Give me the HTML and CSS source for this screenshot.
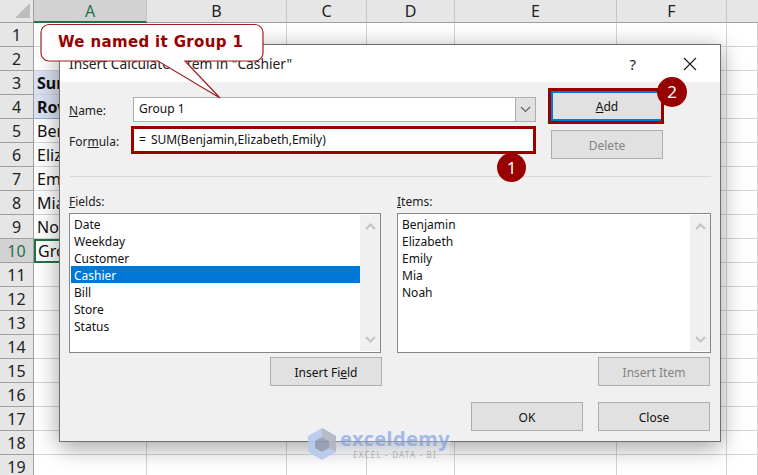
FILE: index.html
```html
<!DOCTYPE html>
<html lang="en">
<head>
<meta charset="utf-8">
<title>Insert Calculated Item</title>
<link rel="stylesheet" href="styles.css">
</head>
<body>
<div class="stage">
  <div class="sheet">
    <div class="ch corner"><svg width="33" height="22" viewBox="0 0 33 22"><path d="M15 18 30 3V18Z" fill="#bcbcbc"/></svg></div>
    <div class="ch ch-on">A</div><div class="ch">B</div><div class="ch">C</div><div class="ch">D</div><div class="ch">E</div><div class="ch">F</div><div class="ch end"></div>

    <div class="rh">1</div><div class="c"></div><div class="c"></div><div class="c"></div><div class="c"></div><div class="c"></div><div class="c"></div><div class="c"></div>
    <div class="rh">2</div><div class="c"></div><div class="c"></div><div class="c"></div><div class="c"></div><div class="c"></div><div class="c"></div><div class="c"></div>
    <div class="rh">3</div><div class="c hd">Sum of Bill</div><div class="c"></div><div class="c"></div><div class="c"></div><div class="c"></div><div class="c"></div><div class="c"></div>
    <div class="rh">4</div><div class="c hd hd-last">Row Labels</div><div class="c"></div><div class="c"></div><div class="c"></div><div class="c"></div><div class="c"></div><div class="c"></div>
    <div class="rh">5</div><div class="c">Benjamin</div><div class="c"></div><div class="c"></div><div class="c"></div><div class="c"></div><div class="c"></div><div class="c"></div>
    <div class="rh">6</div><div class="c">Elizabeth</div><div class="c"></div><div class="c"></div><div class="c"></div><div class="c"></div><div class="c"></div><div class="c"></div>
    <div class="rh">7</div><div class="c">Emily</div><div class="c"></div><div class="c"></div><div class="c"></div><div class="c"></div><div class="c"></div><div class="c"></div>
    <div class="rh">8</div><div class="c">Mia</div><div class="c"></div><div class="c"></div><div class="c"></div><div class="c"></div><div class="c"></div><div class="c"></div>
    <div class="rh">9</div><div class="c">Noah</div><div class="c"></div><div class="c"></div><div class="c"></div><div class="c"></div><div class="c"></div><div class="c"></div>
    <div class="rh rh-on">10</div><div class="c active">Group 1</div><div class="c"></div><div class="c"></div><div class="c"></div><div class="c"></div><div class="c"></div><div class="c"></div>
    <div class="rh">11</div><div class="c"></div><div class="c"></div><div class="c"></div><div class="c"></div><div class="c"></div><div class="c"></div><div class="c"></div>
    <div class="rh">12</div><div class="c"></div><div class="c"></div><div class="c"></div><div class="c"></div><div class="c"></div><div class="c"></div><div class="c"></div>
    <div class="rh">13</div><div class="c"></div><div class="c"></div><div class="c"></div><div class="c"></div><div class="c"></div><div class="c"></div><div class="c"></div>
    <div class="rh">14</div><div class="c"></div><div class="c"></div><div class="c"></div><div class="c"></div><div class="c"></div><div class="c"></div><div class="c"></div>
    <div class="rh">15</div><div class="c"></div><div class="c"></div><div class="c"></div><div class="c"></div><div class="c"></div><div class="c"></div><div class="c"></div>
    <div class="rh">16</div><div class="c"></div><div class="c"></div><div class="c"></div><div class="c"></div><div class="c"></div><div class="c"></div><div class="c"></div>
    <div class="rh">17</div><div class="c"></div><div class="c"></div><div class="c"></div><div class="c"></div><div class="c"></div><div class="c"></div><div class="c"></div>
    <div class="rh">18</div><div class="c"></div><div class="c"></div><div class="c"></div><div class="c"></div><div class="c"></div><div class="c"></div><div class="c"></div>
    <div class="rh">19</div><div class="c"></div><div class="c"></div><div class="c"></div><div class="c"></div><div class="c"></div><div class="c"></div><div class="c"></div>
  </div>

  <div class="dialog">
    <div class="titlebar">
      <span class="title">Insert Calculated Item in "Cashier"</span>
      <span class="help">?</span>
      <svg class="close-x" width="14" height="14" viewBox="0 0 14 14"><path d="M1 1 13 13M13 1 1 13" stroke="#1a1a1a" stroke-width="1.1" fill="none"/></svg>
    </div>
    <div class="body">
      <div class="top">
        <div class="form">
          <div class="form-row">
            <label class="lbl"><u>N</u>ame:</label>
            <div class="combo">
              <div class="combo-text">Group 1</div>
              <div class="combo-btn"><svg width="11" height="7" viewBox="0 0 11 7"><path d="M1 1 5.5 5.5 10 1" stroke="#606060" stroke-width="1.1" fill="none"/></svg></div>
            </div>
          </div>
          <div class="form-row form-row-2">
            <label class="lbl">For<u>m</u>ula:</label>
            <div class="formula">= SUM(Benjamin,Elizabeth,Emily)</div>
          </div>
        </div>
        <div class="actions">
          <button class="btn btn-default"><u>A</u>dd</button>
          <button class="btn btn-off">Delete</button>
        </div>
      </div>
      <div class="sep"></div>
      <div class="lists">
        <div class="col">
          <div class="list-label"><u>F</u>ields:</div>
          <div class="list">
            <div class="rows">
              <div class="row">Date</div>
              <div class="row">Weekday</div>
              <div class="row">Customer</div>
              <div class="row row-on">Cashier</div>
              <div class="row">Bill</div>
              <div class="row">Store</div>
              <div class="row">Status</div>
            </div>
            <div class="scroll">
              <svg width="11" height="7" viewBox="0 0 11 7"><path d="M1 6 5.5 1.5 10 6" stroke="#c4c4c4" stroke-width="2" fill="none"/></svg>
              <svg width="11" height="7" viewBox="0 0 11 7"><path d="M1 1 5.5 5.5 10 1" stroke="#c4c4c4" stroke-width="2" fill="none"/></svg>
            </div>
          </div>
          <div class="col-btn col-btn-a"><button class="btn">Insert Fi<u>e</u>ld</button></div>
        </div>
        <div class="col">
          <div class="list-label"><u>I</u>tems:</div>
          <div class="list">
            <div class="rows">
              <div class="row">Benjamin</div>
              <div class="row">Elizabeth</div>
              <div class="row">Emily</div>
              <div class="row">Mia</div>
              <div class="row">Noah</div>
            </div>
            <div class="scroll">
              <svg width="11" height="7" viewBox="0 0 11 7"><path d="M1 6 5.5 1.5 10 6" stroke="#c4c4c4" stroke-width="2" fill="none"/></svg>
              <svg width="11" height="7" viewBox="0 0 11 7"><path d="M1 1 5.5 5.5 10 1" stroke="#c4c4c4" stroke-width="2" fill="none"/></svg>
            </div>
          </div>
          <div class="col-btn col-btn-b"><button class="btn btn-off">Insert Item</button></div>
        </div>
      </div>
      <div class="footer">
        <button class="btn">OK</button>
        <button class="btn">Close</button>
      </div>
    </div>
  </div>

  <div class="add-mark"></div>
  <div class="badge badge-1">1</div>
  <div class="badge badge-2">2</div>

  <div class="callout">
    <svg class="callout-shape" width="232" height="84" viewBox="0 0 232 84">
      <path d="M13 1.5H219a8 8 0 0 1 8 8V30a8 8 0 0 1-8 8H149L184 75 122 38H13a8 8 0 0 1-8-8V9.5a8 8 0 0 1 8-8Z" fill="#fffdfd" stroke="#9c2222" stroke-width="1.2"/>
    </svg>
    <span class="callout-text">We named it Group 1</span>
  </div>

  <div class="mark">
    <svg class="mark-logo" width="28" height="32" viewBox="0 0 28 32">
      <path d="M14 0 28 8V24L14 32 0 24V8Z" fill="#b4c8ee"/>
      <path d="M14 9 21 13V20L14 24 7 20V13Z" fill="#8f98ad"/>
      <path d="M14 0 28 8V24L21 20V13L14 9Z" fill="#aeb3c0"/>
    </svg>
    <div class="mark-text">
      <span class="mark-name">exceldemy</span>
      <span class="mark-sub">EXCEL - DATA - BI</span>
    </div>
  </div>
</div>
</body>
</html>
```

FILE: styles.css
```css
* { box-sizing: border-box; }
html, body { margin: 0; padding: 0; }
body { width: 758px; height: 475px; overflow: hidden; background: #fff; }
.stage { position: relative; width: 758px; height: 475px; overflow: hidden; font-family: "Noto Sans", "Open Sans", sans-serif; color: #111; }

/* worksheet */
.sheet {
  display: grid;
  grid-template-columns: 34px 113px 140px 80px 88px 162px 110px 31px;
  grid-template-rows: 23px repeat(19, 24px);
  font-size: 16px;
}
.ch {
  background: #e6e6e6;
  border-right: 1px solid #c6c6c6;
  border-bottom: 1px solid #9f9f9f;
  text-align: center;
  line-height: 23px;
  color: #222;
}
.corner { border-right: 1px solid #9f9f9f; }
.corner svg { display: block; }
.ch-on { background: #d2d2d2; color: #1f7246; border-bottom: 2px solid #217346; }
.end { border-right: 0; }
.rh {
  background: #e6e6e6;
  border-right: 1px solid #9f9f9f;
  border-bottom: 1px solid #9f9f9f;
  text-align: center;
  line-height: 25px;
  color: #222;
  overflow: hidden;
}
.rh-on { background: #d2d2d2; color: #1f7246; }
.c {
  border-right: 1px solid #d4d4d4;
  border-bottom: 1px solid #d4d4d4;
  padding-left: 3px;
  line-height: 25px;
  white-space: nowrap;
  overflow: hidden;
}
.hd { background: #d9e1f2; font-weight: 700; }
.hd-last { border-bottom-color: #8ea9db; }
.active { border: 2px solid #217346; padding-left: 2px; line-height: 21px; }

/* dialog */
.dialog {
  position: absolute;
  left: 59px;
  top: 44px;
  width: 662px;
  height: 398px;
  border: 1px solid #6e6e6e;
  background: #f0f0f0;
  box-shadow: 0 5px 22px rgba(0, 0, 0, .38);
  font-size: 12px;
}
.titlebar {
  display: flex;
  align-items: center;
  height: 37px;
  padding: 0 23px 0 9px;
  background: #fff;
}
.title { flex: 1; font-size: 13.8px; color: #222; }
.help { font-size: 15px; margin-right: 47px; color: #222; }
.body { padding: 9px 9px 0; }
.top { display: flex; gap: 15px; height: 68px; }
.form { width: 467px; padding-top: 6px; }
.form-row { display: grid; grid-template-columns: 64px 1fr; align-items: center; }
.form-row-2 { margin-top: 7px; }
.lbl { color: #222; padding-top: 2px; }
.combo { display: flex; height: 25px; border: 1px solid #adadad; background: #fff; }
.combo-text { flex: 1; padding-left: 5px; line-height: 22px; font-size: 12px; }
.combo-btn {
  width: 20px;
  display: flex;
  align-items: center;
  justify-content: center;
  background: #e1e1e1;
  border-left: 1px solid #adadad;
}
.formula {
  height: 22px;
  margin: 0 3px 0 1px;
  padding-left: 5px;
  line-height: 21px;
  word-spacing: 2px;
  background: #fff;
  outline: 3px solid #990000;
}
.actions { display: flex; flex-direction: column; gap: 9px; width: 112px; }
.btn {
  width: 112px;
  height: 29px;
  padding: 2px 0 0;
  border: 1px solid #adadad;
  background: #e1e1e1;
  font: inherit;
  color: #111;
}
.btn-default { height: 30px; border: 2px solid #0078d7; padding-top: 0; }
.btn-off { color: #838383; }
.sep { height: 1px; margin: 17px 0 0 1px; background: #d9d9d9; }
.lists { display: grid; grid-template-columns: 312px 314px; gap: 16px; margin-top: 15px; }
.list-label { height: 18px; margin-bottom: 3px; line-height: 20px; color: #222; }
.list { display: flex; height: 140px; border: 1px solid #82878f; background: #fff; padding: 1px 0 1px 1px; }
.rows { flex: 1; }
.row { height: 17px; padding-left: 3px; line-height: 19px; }
.row-on { background: #0078d7; color: #fff; }
.scroll {
  width: 20px;
  padding: 8px 0 8px;
  display: flex;
  flex-direction: column;
  justify-content: space-between;
  align-items: center;
  background: #f0f0f0;
}
.scroll svg { display: block; }
.col-btn { display: flex; justify-content: flex-end; margin-top: 4px; }
.col-btn-a { margin-right: -1px; }
.col-btn-b { margin-right: 1px; }
.footer { display: flex; justify-content: flex-end; gap: 15px; margin-top: 16px; padding-right: 1px; }

/* annotations */
.add-mark {
  position: absolute;
  left: 548px;
  top: 88px;
  width: 116px;
  height: 36px;
  border: 3px solid #990000;
}
.badge {
  position: absolute;
  width: 29px;
  height: 29px;
  border-radius: 50%;
  background: #990000;
  color: #fff;
  font-size: 17px;
  line-height: 29px;
  text-align: center;
}
.badge-1 { left: 497px; top: 153px; }
.badge-2 { left: 657px; top: 77px; width: 30px; height: 30px; line-height: 30px; }
.callout { position: absolute; left: 36px; top: 23px; width: 232px; height: 84px; }
.callout-shape { display: block; }
.callout-text {
  position: absolute;
  left: 22px;
  top: 8px;
  font-family: "DejaVu Sans", sans-serif;
  font-weight: 700;
  font-size: 15px;
  line-height: 22px;
  letter-spacing: .35px;
  color: #990000;
  white-space: nowrap;
}
.mark {
  position: absolute;
  left: 308px;
  top: 428px;
  width: 142px;
  height: 30px;
  display: flex;
  gap: 4px;
  background: rgba(235, 240, 250, .28);
}
.mark-logo { flex: none; opacity: .85; }
.mark-text { display: flex; flex-direction: column; align-items: center; }
.mark-name { font-size: 20px; line-height: 22px; font-weight: 700; letter-spacing: .4px; color: rgba(120, 155, 225, .65); }
.mark-sub { font-size: 8px; line-height: 9px; letter-spacing: 1.2px; color: rgba(130, 130, 130, .6); }
```
